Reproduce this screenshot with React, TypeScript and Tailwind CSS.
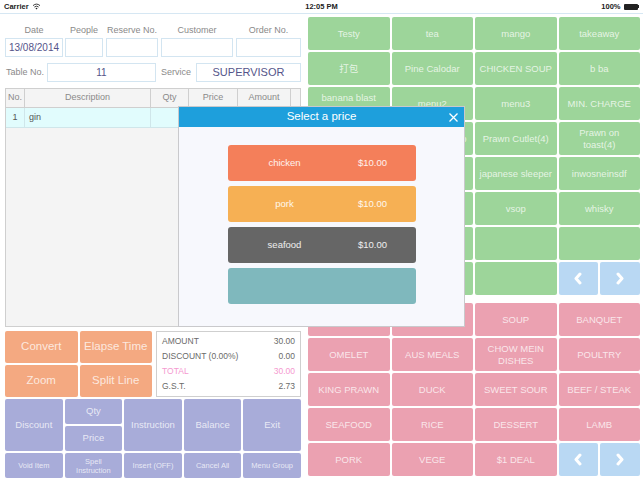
import React from "react";

const green = [
  ["Testy", "tea", "mango", "takeaway"],
  ["打包", "Pine Calodar", "CHICKEN SOUP", "b ba"],
  ["banana blast smoothie", "menu2", "menu3", "MIN. CHARGE"],
  ["", "Seafood Combo", "Prawn Cutlet(4)", "Prawn on\ntoast(4)"],
  ["", "Prawn Cocktail", "japanese sleeper", "inwosneinsdf"],
  ["", "", "vsop", "whisky"],
  ["", "", "", ""],
  ["", "", "", "ARROWS"],
];

const pink = [
  ["", "", "SOUP", "BANQUET"],
  ["OMELET", "AUS MEALS", "CHOW MEIN DISHES", "POULTRY"],
  ["KING PRAWN", "DUCK", "SWEET  SOUR", "BEEF / STEAK"],
  ["SEAFOOD", "RICE", "DESSERT", "LAMB"],
  ["PORK", "VEGE", "$1 DEAL", "ARROWS"],
];

function Chevron({ dir }: { dir: "l" | "r" }) {
  return (
    <svg width="10" height="13" viewBox="0 0 10 13">
      <polyline
        points={dir === "l" ? "7,2 3,6.5 7,11" : "3,2 7,6.5 3,11"}
        fill="none"
        stroke="white"
        strokeWidth="3"
        strokeLinecap="round"
        strokeLinejoin="round"
      />
    </svg>
  );
}

function Arrows() {
  return (
    <div className="flex gap-[2px] h-full">
      <div className="flex-1 bg-[#b9d8f3] rounded-[2px] flex items-center justify-center">
        <Chevron dir="l" />
      </div>
      <div className="flex-1 bg-[#b9d8f3] rounded-[2px] flex items-center justify-center">
        <Chevron dir="r" />
      </div>
    </div>
  );
}

function Field({ w, children }: { w: string; children?: React.ReactNode }) {
  return (
    <div
      className={`${w} h-[19px] border border-[#d3e5f1] bg-white flex items-center justify-center text-[10px] text-[#55548a]`}
    >
      {children}
    </div>
  );
}

export default function App() {
  return (
    <div className="relative w-[643px] h-[482px] bg-white overflow-hidden font-['Liberation_Sans',Arial,'Noto_Sans_CJK_SC',sans-serif]">
      {/* status bar */}
      <div className="h-[14px] border-b border-[#d6e7f3] flex items-center px-[4px] text-[7.5px] font-bold text-[#222] relative">
        <span>Carrier</span>
        <svg width="9" height="7" viewBox="0 0 10 8" className="ml-[3px]">
          <path d="M1 3 Q5 -0.5 9 3" fill="none" stroke="#222" strokeWidth="1" />
          <path d="M2.6 4.6 Q5 2.6 7.4 4.6" fill="none" stroke="#222" strokeWidth="1" />
          <path d="M5 7.5 L3.8 6 Q5 5 6.2 6 Z" fill="#222" />
        </svg>
        <span className="absolute left-0 right-0 text-center">12:05 PM</span>
        <span className="ml-auto mr-[3px]">100%</span>
        <div className="flex items-center">
          <div className="w-[14px] h-[6px] bg-[#222] rounded-[1px]" />
          <div className="w-[1.5px] h-[3px] bg-[#222]" />
        </div>
      </div>

      <div className="flex">
        {/* left panel */}
        <div className="w-[305px] pl-[5px] pr-[4px]">
          <div className="flex mt-[9px] h-[15px] text-[9px] text-[#8a8a8a] leading-[14px]">
            <div className="w-[58px] text-center">Date</div>
            <div className="w-[38px] ml-[2px] text-center">People</div>
            <div className="w-[52px] ml-[3px] text-center">Reserve No.</div>
            <div className="w-[72px] ml-[3px] text-center">Customer</div>
            <div className="w-[65px] ml-[3px] text-center">Order No.</div>
          </div>
          <div className="flex">
            <Field w="w-[58px]">13/08/2014</Field>
            <div className="ml-[2px]"><Field w="w-[38px]" /></div>
            <div className="ml-[3px]"><Field w="w-[52px]" /></div>
            <div className="ml-[3px]"><Field w="w-[72px]" /></div>
            <div className="ml-[3px]"><Field w="w-[65px]" /></div>
          </div>
          <div className="flex mt-[6px] items-center">
            <div className="w-[42px] text-[9px] text-[#8a8a8a] pl-[1px]">Table No.</div>
            <Field w="w-[109px]">11</Field>
            <div className="w-[40px] text-[9px] text-[#8a8a8a] text-center">Service</div>
            <Field w="w-[105px]">
              <span className="text-[11px]">SUPERVISOR</span>
            </Field>
          </div>

          {/* table */}
          <div className="mt-[6px] h-[239px] border border-[#cfcfcf] flex flex-col bg-[#f4f4f4]">
            <div className="flex h-[19px] text-[9px] text-[#8a8a8a] border-b border-[#cfcfcf] bg-[#f4f4f4]">
              <div className="w-[19px] flex items-center justify-center border-r border-[#cfcfcf]">No.</div>
              <div className="w-[126px] flex items-center justify-center border-r border-[#cfcfcf]">Description</div>
              <div className="w-[38px] flex items-center justify-center border-r border-[#cfcfcf]">Qty</div>
              <div className="w-[49px] flex items-center justify-center border-r border-[#cfcfcf]">Price</div>
              <div className="w-[53px] flex items-center justify-center border-r border-[#cfcfcf]">Amount</div>
              <div className="flex-1" />
            </div>
            <div className="flex h-[20px] text-[9px] text-[#555] border-b border-[#cfe6ea] bg-[#e1fcfd]">
              <div className="w-[19px] flex items-center justify-center border-r border-[#cfe6ea]">1</div>
              <div className="w-[126px] flex items-center pl-[4px] border-r border-[#cfe6ea]">gin</div>
              <div className="w-[38px] border-r border-[#cfe6ea]" />
              <div className="flex-1" />
            </div>
            <div className="flex-1" />
          </div>

          {/* orange + summary */}
          <div className="flex mt-[4px] h-[66px]">
            <div className="w-[147px] grid grid-cols-2 grid-rows-2 gap-[2px]">
              {["Convert", "Elapse Time", "Zoom", "Split Line"].map((t) => (
                <div
                  key={t}
                  className="bg-[#f4a981] rounded-[2px] flex items-center justify-center text-[11.5px] text-white/75"
                >
                  {t}
                </div>
              ))}
            </div>
            <div className="ml-[4px] flex-1 border border-[#cfcfcf] bg-white px-[5px] py-[2px] text-[8.5px] text-[#6a6a6a] flex flex-col justify-between">
              <div className="flex justify-between leading-[15px]"><span>AMOUNT</span><span>30.00</span></div>
              <div className="flex justify-between leading-[15px]"><span>DISCOUNT (0.00%)</span><span>0.00</span></div>
              <div className="flex justify-between leading-[15px] text-[#f59ad0]"><span>TOTAL</span><span>30.00</span></div>
              <div className="flex justify-between leading-[15px]"><span>G.S.T.</span><span>2.73</span></div>
            </div>
          </div>

          {/* purple */}
          <div className="grid grid-cols-5 gap-[2px] mt-[2px] h-[52px]">
            <div className="bg-[#a8acd9] rounded-[2px] flex items-center justify-center text-[9.5px] text-white/75">Discount</div>
            <div className="flex flex-col gap-[2px]">
              <div className="flex-1 bg-[#a8acd9] rounded-[2px] flex items-center justify-center text-[9.5px] text-white/75">Qty</div>
              <div className="flex-1 bg-[#a8acd9] rounded-[2px] flex items-center justify-center text-[9.5px] text-white/75">Price</div>
            </div>
            <div className="bg-[#a8acd9] rounded-[2px] flex items-center justify-center text-[9.5px] text-white/75">Instruction</div>
            <div className="bg-[#a8acd9] rounded-[2px] flex items-center justify-center text-[9.5px] text-white/75">Balance</div>
            <div className="bg-[#a8acd9] rounded-[2px] flex items-center justify-center text-[9.5px] text-white/75">Exit</div>
          </div>
          <div className="grid grid-cols-5 gap-[2px] mt-[2px] h-[25px]">
            {["Void Item", "Spell Instruction", "Insert (OFF)", "Cancel All", "Menu Group"].map((t) => (
              <div
                key={t}
                className="bg-[#a8acd9] rounded-[2px] flex items-center justify-center text-center text-[7.5px] leading-[9px] text-white/75 px-[6px]"
              >
                {t}
              </div>
            ))}
          </div>
        </div>

        {/* right panel */}
        <div className="ml-[3px] w-[332px] pt-[3px]">
          <div className="grid grid-cols-4 gap-[2px]">
            {green.flat().map((t, i) =>
              t === "ARROWS" ? (
                <div key={i} className="h-[33px]">
                  <Arrows />
                </div>
              ) : (
                <div
                  key={i}
                  className="h-[33px] bg-[#9dd59a] rounded-[2px] flex items-center justify-center text-center text-[9.5px] leading-[12px] text-white/75 px-[2px] whitespace-pre-line"
                >
                  {t}
                </div>
              )
            )}
          </div>
          <div className="grid grid-cols-4 gap-[2px] mt-[8px]">
            {pink.flat().map((t, i) =>
              t === "ARROWS" ? (
                <div key={i} className="h-[33px]">
                  <Arrows />
                </div>
              ) : (
                <div
                  key={i}
                  className="h-[33px] bg-[#eba1b1] rounded-[2px] flex items-center justify-center text-center text-[9.5px] leading-[12px] text-white/75 px-[8px]"
                >
                  {t}
                </div>
              )
            )}
          </div>
        </div>
      </div>

      {/* modal */}
      <div className="absolute left-[178px] top-[106px] w-[287px] h-[221px] border border-[#c9c9cc] bg-[#f7f8fd] flex flex-col">
        <div className="h-[20px] bg-[#1e9fdc] relative flex items-center justify-center text-[11.5px] text-white">
          Select a price
          <svg width="9" height="9" viewBox="0 0 9 9" className="absolute right-[6px] top-[6px]">
            <path d="M0.5 0.5 L8.5 8.5 M8.5 0.5 L0.5 8.5" stroke="white" strokeWidth="1.3" />
          </svg>
        </div>
        <div className="flex flex-col items-center pt-[18px] gap-[5px]">
          {[
            ["chicken", "bg-[#f47f5a]"],
            ["pork", "bg-[#f6b054]"],
            ["seafood", "bg-[#666666]"],
            ["", "bg-[#7fb8bd]"],
          ].map(([label, bg], i) => (
            <div
              key={i}
              className={`w-[188px] h-[36px] rounded-[3px] ${bg} flex items-center text-[9.5px] text-white/90`}
            >
              {label && (
                <>
                  <span className="ml-[17px] w-[80px] text-center">{label}</span>
                  <span className="ml-auto mr-[13px] w-[60px] text-center">$10.00</span>
                </>
              )}
            </div>
          ))}
        </div>
      </div>
    </div>
  );
}
